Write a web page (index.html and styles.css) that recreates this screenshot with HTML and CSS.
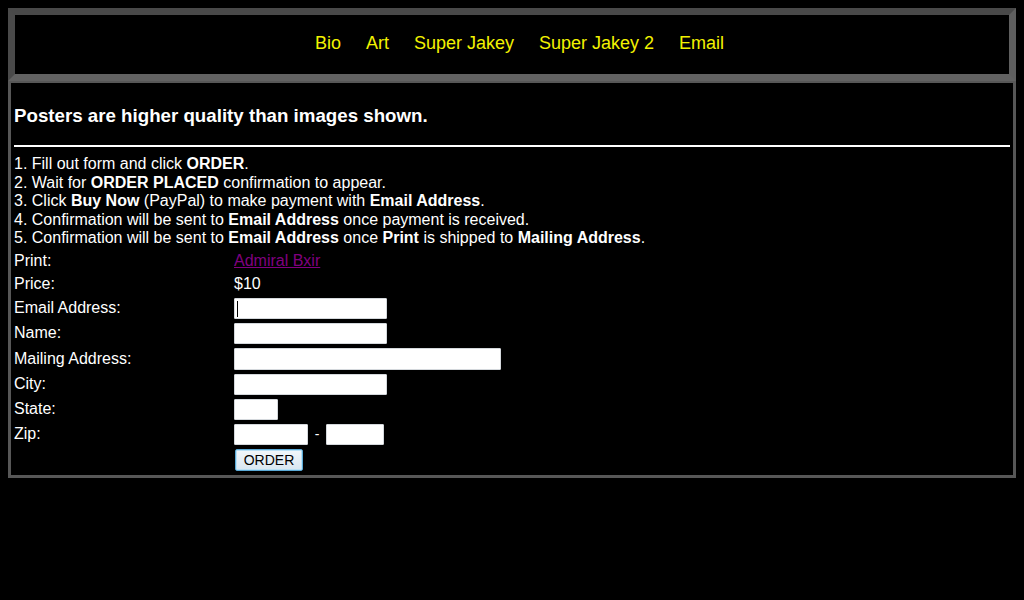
FILE: index.html
```html
<!DOCTYPE html>
<html>
<head>
<meta charset="utf-8">
<title>Posters</title>
<link rel="stylesheet" href="styles.css">
</head>
<body>
<div class="header">
  <nav class="nav">
    <a href="#">Bio</a>
    <a href="#">Art</a>
    <a href="#">Super Jakey</a>
    <a href="#">Super Jakey 2</a>
    <a href="#">Email</a>
  </nav>
</div>
<div class="content">
  <h3 class="notice">Posters are higher quality than images shown.</h3>
  <hr class="rule">
  <div class="steps">
    1. Fill out form and click <b>ORDER</b>.<br>
    2. Wait for <b>ORDER PLACED</b> confirmation to appear.<br>
    3. Click <b>Buy Now</b> (PayPal) to make payment with <b>Email Address</b>.<br>
    4. Confirmation will be sent to <b>Email Address</b> once payment is received.<br>
    5. Confirmation will be sent to <b>Email Address</b> once <b>Print</b> is shipped to <b>Mailing Address</b>.
  </div>
  <form class="order">
    <div class="row text-row"><span class="label">Print:</span><span class="field"><a class="print-link" href="#">Admiral Bxir</a></span></div>
    <div class="row text-row"><span class="label">Price:</span><span class="field">$10</span></div>
    <div class="row"><span class="label">Email Address:</span><span class="field"><span class="caret-wrap"><input class="inp w-md" type="text"><span class="caret"></span></span></span></div>
    <div class="row"><span class="label">Name:</span><span class="field"><input class="inp w-md" type="text"></span></div>
    <div class="row tall"><span class="label">Mailing Address:</span><span class="field"><input class="inp w-lg h-22" type="text"></span></div>
    <div class="row"><span class="label">City:</span><span class="field"><input class="inp w-md" type="text"></span></div>
    <div class="row"><span class="label">State:</span><span class="field"><input class="inp w-xs" type="text"></span></div>
    <div class="row"><span class="label">Zip:</span><span class="field"><input class="inp w-zip" type="text"><span class="dash">-</span><input class="inp w-zip2" type="text"></span></div>
    <div class="row btn-row"><span class="label"></span><span class="field"><button class="order-btn" type="button">ORDER</button></span></div>
  </form>
</div>
</body>
</html>
```

FILE: styles.css
```css
html, body {
  background: #000;
}
body {
  margin: 8px;
  font-family: "Liberation Sans", Arial, sans-serif;
  color: #fff;
  font-size: 16px;
}
.header {
  border-style: solid;
  border-width: 7px;
  border-color: #494949 #5f5f5f #626262 #4a4a4a;
  height: 59px;
  display: flex;
  align-items: center;
  justify-content: center;
}
.nav {
  display: flex;
  gap: 25px;
  padding-left: 15px;
  padding-bottom: 3px;
}
.nav a {
  color: #f2f200;
  text-decoration: none;
  font-size: 18px;
}
.content {
  border: 3px solid #575757;
  border-top-width: 2px;
  padding: 0 3px 2px 3px;
}
.notice {
  font-size: 18.72px;
  font-weight: bold;
  margin: 22px 0 18px 0;
  line-height: 22px;
}
.rule {
  border: none;
  height: 2px;
  background: #fff;
  margin: 0 0 8px 0;
}
.steps {
  line-height: 18.5px;
}
.order {
  margin-top: 2px;
}
.row {
  display: flex;
  align-items: center;
  height: 25px;
}
.row.text-row {
  height: 23px;
}
.row.tall {
  height: 26px;
}
.row.btn-row {
  height: 26px;
}
.label {
  width: 220px;
  flex: none;
}
.field {
  display: flex;
  align-items: center;
}
.print-link {
  color: #800080;
}
.inp {
  box-sizing: border-box;
  height: 21px;
  border: 1px solid #d4d8dc;
  border-radius: 1px;
  background: #fff;
  margin: 0;
  padding: 0 2px;
}
.h-22 {
  height: 22px;
}
.w-md { width: 153px; }
.w-lg { width: 267px; }
.w-xs { width: 44px; }
.w-zip { width: 74px; }
.w-zip2 { width: 58px; }
.dash {
  width: 18px;
  text-align: center;
  font-size: 14px;
}
.caret-wrap {
  position: relative;
  display: inline-block;
  height: 21px;
}
.caret {
  position: absolute;
  left: 3px;
  top: 3px;
  width: 1px;
  height: 16px;
  background: #000;
}
.order-btn {
  margin-left: 1px;
  width: 68px;
  height: 22px;
  padding: 0;
  font-family: "Liberation Sans", Arial, sans-serif;
  font-size: 14px;
  color: #000;
  background: linear-gradient(#f2f7fb, #d8e6f1);
  border: 1px solid #5aa9d6;
  border-radius: 2px;
  box-shadow: inset 0 0 0 1px #b9e0f5;
}
```
